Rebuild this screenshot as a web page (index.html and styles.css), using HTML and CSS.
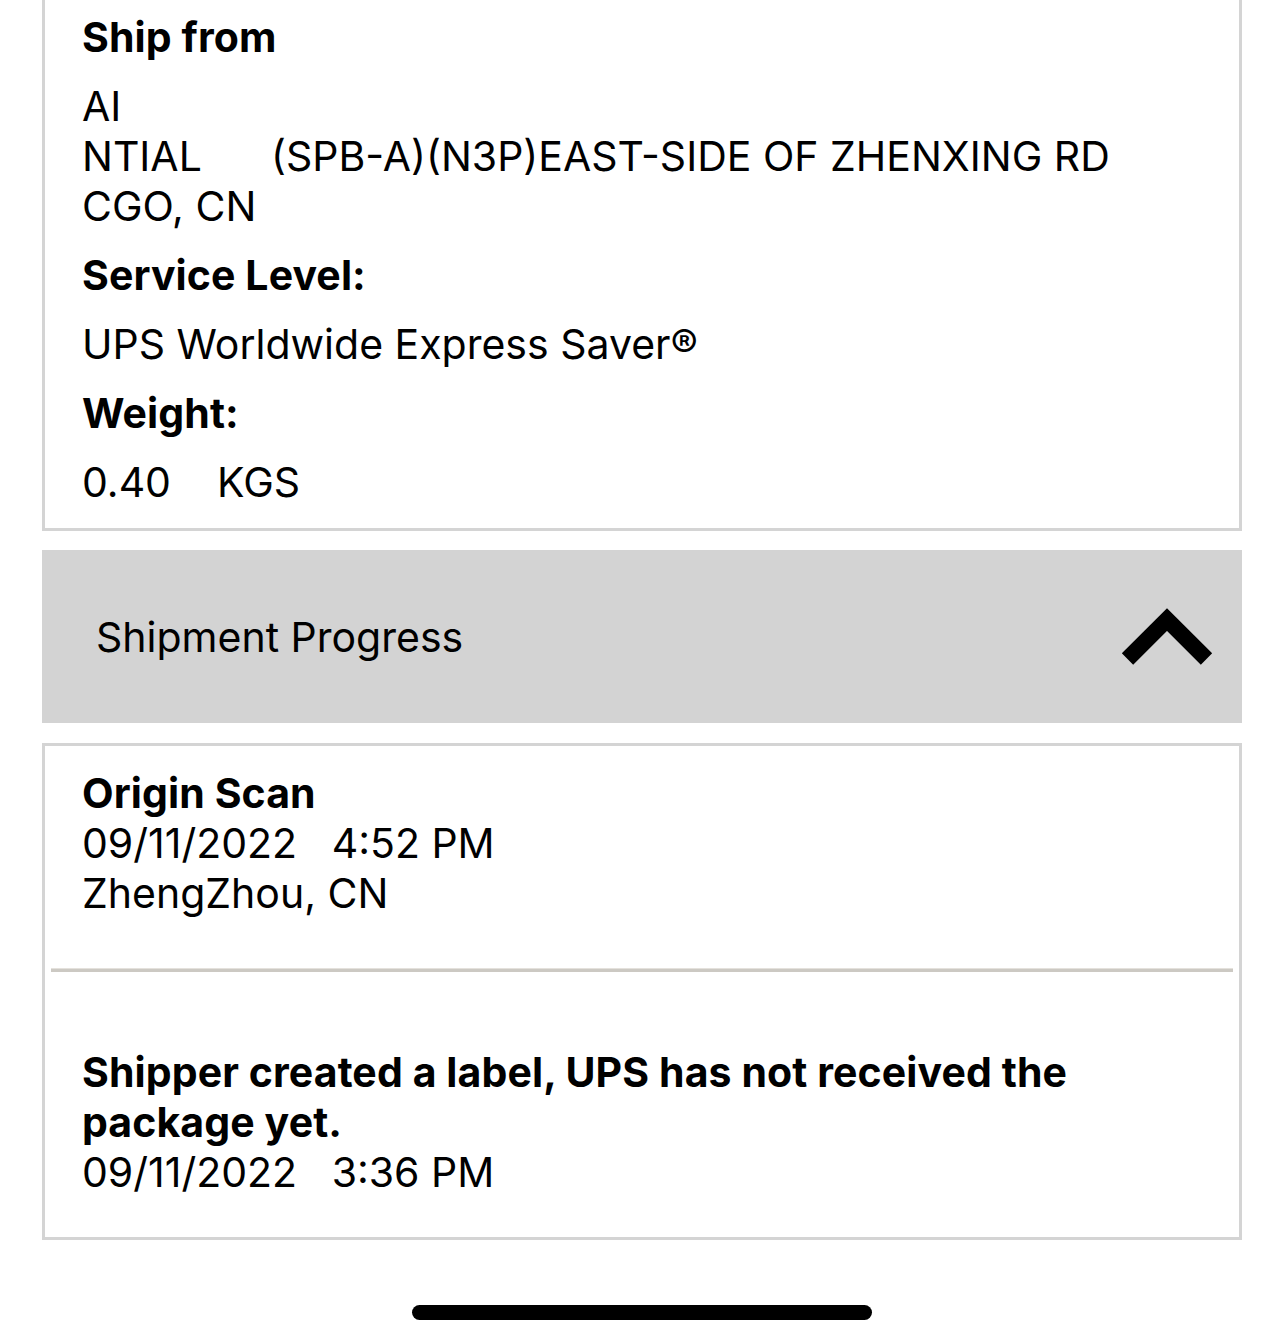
FILE: index.html
```html
<!DOCTYPE html>
<html lang="en">
<head>
<meta charset="utf-8">
<title>Shipment Details</title>
<link rel="stylesheet" href="styles.css">
</head>
<body>
<main class="page">
  <section class="card card-details">
    <h3 class="label">Ship from</h3>
    <p class="value pre">AI
NTIAL      (SPB-A)(N3P)EAST-SIDE OF ZHENXING RD
CGO, CN</p>
    <h3 class="label">Service Level:</h3>
    <p class="value">UPS Worldwide Express Saver®</p>
    <h3 class="label">Weight:</h3>
    <p class="value pre">0.40    KGS</p>
  </section>

  <div class="accordion-header">
    <span class="accordion-title">Shipment Progress</span>
    <svg class="chevron" width="94" height="64" viewBox="0 0 94 64" aria-hidden="true">
      <polyline points="7.5,54 47,14.5 86.5,54" fill="none" stroke="#000" stroke-width="16" stroke-linejoin="miter" stroke-linecap="butt"/>
    </svg>
  </div>

  <section class="card card-progress">
    <div class="event event-first">
      <div class="event-title">Origin Scan</div>
      <div class="event-line pre">09/11/2022   4:52 PM</div>
      <div class="event-line">ZhengZhou, CN</div>
    </div>
    <div class="divider"></div>
    <div class="event event-last">
      <div class="event-title">Shipper created a label, UPS has not received the package yet.</div>
      <div class="event-line pre">09/11/2022   3:36 PM</div>
    </div>
  </section>

  <div class="home-indicator"></div>
</main>
</body>
</html>
```

FILE: styles.css
```css
* { box-sizing: border-box; }

html, body {
  margin: 0;
  padding: 0;
  background: #ffffff;
}

body {
  font-family: Inter, "Liberation Sans", Arial, sans-serif;
  color: #000;
  font-size: 41px;
  line-height: 50px;
}

.page {
  width: 1284px;
  display: flex;
  flex-direction: column;
  align-items: flex-start;
}

.card {
  margin-left: 42px;
  width: 1200px;
  border: 3px solid #d4d4d4;
  background: #fff;
}

.card-details {
  border-top: none;
  padding: 12px 30px 21px 37px;
}

.label {
  margin: 0;
  font-size: 41px;
  font-weight: 700;
  line-height: 50px;
  letter-spacing: 0.1px;
}

.value {
  margin: 19px 0 19px;
  line-height: 50px;
}

.card-details .value:last-child {
  margin-bottom: 0;
}

.pre {
  white-space: pre-wrap;
}

.accordion-header {
  margin-top: 19px;
  margin-left: 42px;
  width: 1200px;
  height: 173px;
  background: #d3d3d3;
  display: flex;
  align-items: center;
  justify-content: space-between;
  padding: 0 28px 0 54px;
}

.accordion-title {
  font-weight: 400;
}

.chevron {
  display: block;
  flex-shrink: 0;
}

.card-progress {
  margin-top: 20px;
}

.event {
  padding-left: 37px;
  padding-right: 120px;
}

.event-first {
  padding-top: 22px;
  padding-bottom: 50px;
}

.event-last {
  padding-top: 75px;
  padding-bottom: 40px;
}

.event-title {
  font-weight: 700;
  letter-spacing: 0.1px;
}

.divider {
  margin: 0 6px;
  height: 4px;
  background: #ccc9c3;
  border-top: 1px solid #e4e1dc;
}

.home-indicator {
  align-self: center;
  margin-top: 65px;
  width: 460px;
  height: 15px;
  border-radius: 8px;
  background: #000;
}
```
